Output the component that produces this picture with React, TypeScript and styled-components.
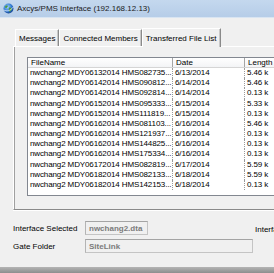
import React from "react";
import styled, { createGlobalStyle } from "styled-components";

const GlobalStyle = createGlobalStyle`
  html, body {
    margin: 0;
    padding: 0;
    background: #f0f0f0;
  }
  * {
    box-sizing: border-box;
  }
`;

const files = [
  ["nwchang2 MDY06132014 HMS082735...", "6/13/2014", "5.46 k"],
  ["nwchang2 MDY06142014 HMS090812...", "6/14/2014", "5.46 k"],
  ["nwchang2 MDY06142014 HMS092814...", "6/14/2014", "0.13 k"],
  ["nwchang2 MDY06152014 HMS095333...", "6/15/2014", "5.33 k"],
  ["nwchang2 MDY06152014 HMS111819...", "6/15/2014", "0.13 k"],
  ["nwchang2 MDY06162014 HMS081103...", "6/16/2014", "5.46 k"],
  ["nwchang2 MDY06162014 HMS121937...", "6/16/2014", "0.13 k"],
  ["nwchang2 MDY06162014 HMS144825...", "6/16/2014", "0.13 k"],
  ["nwchang2 MDY06162014 HMS175334...", "6/16/2014", "0.13 k"],
  ["nwchang2 MDY06172014 HMS082819...", "6/17/2014", "5.59 k"],
  ["nwchang2 MDY06182014 HMS082133...", "6/18/2014", "5.59 k"],
  ["nwchang2 MDY06182014 HMS142153...", "6/18/2014", "0.13 k"],
];

const tabs = ["Messages", "Connected Members", "Transferred File List"];

export default function App() {
  return (
    <>
      <GlobalStyle />
      <Window>
        <TitleBar>
          <GlobeIcon />
          <TitleText>Axcys/PMS Interface (192.168.12.13)</TitleText>
        </TitleBar>

        <TabStrip>
          {tabs.map((t, i) => (
            <Tab key={t} active={i === 2}>
              {t}
            </Tab>
          ))}
        </TabStrip>

        <TabPanel>
          <FileList>
            <ListHeader>
              <HeadCell>FileName</HeadCell>
              <HeadCell>Date</HeadCell>
              <HeadCell>Length</HeadCell>
            </ListHeader>
            {files.map(([name, date, size]) => (
              <ListRow key={name}>
                <Cell>{name}</Cell>
                <Cell>{date}</Cell>
                <Cell>{size}</Cell>
              </ListRow>
            ))}
          </FileList>
        </TabPanel>

        <FormRow gap={11}>
          <Label>Interface Selected</Label>
          <ReadOnlyBox width={63}>nwchang2.dta</ReadOnlyBox>
          <SideLabel>Interface</SideLabel>
        </FormRow>
        <FormRow gap={4}>
          <Label>Gate Folder</Label>
          <ReadOnlyBox width={168}>SiteLink</ReadOnlyBox>
        </FormRow>

        <BottomEdge />
      </Window>
    </>
  );
}

function GlobeIcon() {
  return (
    <Icon viewBox="0 0 12 12">
      <defs>
        <radialGradient id="sea" cx="40%" cy="35%" r="70%">
          <stop offset="0%" stopColor="#9fd0ff" />
          <stop offset="60%" stopColor="#2f78d0" />
          <stop offset="100%" stopColor="#123f8c" />
        </radialGradient>
      </defs>
      <circle cx="6" cy="6" r="5.4" fill="url(#sea)" />
      <path d="M2.2 4.2 C3 2.6 4.6 2.4 5.4 3.2 C5 4.4 3.8 4.6 3.6 5.8 C2.8 5.6 2.2 5 2.2 4.2 Z" fill="#4c9a3c" />
      <path d="M6.6 5 C7.8 4.6 9.4 5.4 9.6 6.8 C9 8.4 7.6 9.6 6.6 9.4 C6.8 8.2 6 7.2 6.6 5 Z" fill="#4c9a3c" />
      <path d="M1 7.6 C3.6 9.4 8 9 11.2 4.4" stroke="#ffffff" strokeWidth="0.9" fill="none" opacity="0.85" />
    </Icon>
  );
}

const Window = styled.div`
  width: 274px;
  height: 273px;
  overflow: hidden;
  display: flex;
  flex-direction: column;
  background: #f0f0f0;
  font-family: "Liberation Sans", Arial, sans-serif;
  font-size: 8px;
  color: #000;
`;

const TitleBar = styled.div`
  flex: none;
  height: 18px;
  display: flex;
  align-items: center;
  gap: 3px;
  padding-left: 3px;
  background: linear-gradient(#c4d8ee, #b6cde8);
  border-bottom: 1px solid #d9e5f2;
`;

const Icon = styled.svg`
  width: 11px;
  height: 11px;
  flex: none;
`;

const TitleText = styled.span`
  white-space: nowrap;
  color: #1b1b1b;
  font-size: 8px;
`;

const TabStrip = styled.div`
  flex: none;
  display: flex;
  align-items: flex-end;
  height: 28px;
  padding-left: 15px;
`;

const Tab = styled.div<{ active?: boolean }>`
  height: ${(p) => (p.active ? 19 : 17)}px;
  display: flex;
  align-items: center;
  padding: 0 3px;
  margin-bottom: ${(p) => (p.active ? -1 : 0)}px;
  white-space: nowrap;
  background: #f0f0f0;
  border-top: 1px solid #ffffff;
  border-left: 1px solid #ffffff;
  border-right: 1px solid #8a8a8a;
  box-shadow: inset -1px 0 0 #c8c8c8;
  position: relative;
  z-index: ${(p) => (p.active ? 1 : 0)};
`;

const TabPanel = styled.div`
  flex: none;
  width: 300px;
  margin-left: 13px;
  padding: 10px 0 13px 13px;
  border-top: 1px solid #ffffff;
  border-left: 1px solid #ffffff;
  border-bottom: 1px solid #8a8a8a;
  box-shadow: inset 1px 0 0 #a0a0a0, 0 1px 0 #ffffff;
`;

const FileList = styled.div`
  height: 139px;
  background: #ffffff;
  border: 1px solid #828790;
`;

const columns = "145px 72px 80px";

const ListHeader = styled.div`
  display: grid;
  grid-template-columns: ${columns};
  height: 10px;
  background: linear-gradient(#ffffff, #f3f4f6);
  border-bottom: 1px solid #d5d5d5;
`;

const HeadCell = styled.div`
  line-height: 9px;
  padding-left: 3px;
  border-right: 1px solid #a5a5a5;
  white-space: nowrap;
`;

const ListRow = styled.div`
  display: grid;
  grid-template-columns: ${columns};
  height: 10.18px;
`;

const Cell = styled.div`
  line-height: 10px;
  padding-left: 2px;
  white-space: nowrap;
  overflow: hidden;
  letter-spacing: -0.12px;
  border-right: 1px dotted #9a9a9a;
`;

const FormRow = styled.div<{ gap: number }>`
  flex: none;
  display: flex;
  align-items: center;
  height: 14px;
  margin-top: ${(p) => p.gap}px;
  padding-left: 13px;
`;

const Label = styled.div`
  width: 72px;
  flex: none;
  white-space: nowrap;
`;

const SideLabel = styled.div`
  margin-left: 107px;
  white-space: nowrap;
  margin-top: 2px;
`;

const ReadOnlyBox = styled.div<{ width: number }>`
  width: ${(p) => p.width}px;
  height: 14px;
  flex: none;
  display: flex;
  align-items: center;
  padding-left: 3px;
  font-weight: bold;
  color: #7b7b7b;
  background: #f0f0f0;
  border: 1px solid #c4c4c4;
  border-top-color: #a4a4a4;
  border-left-color: #b4b4b4;
  white-space: nowrap;
  overflow: hidden;
`;

const BottomEdge = styled.div`
  flex: none;
  margin-top: auto;
  height: 6px;
  background: linear-gradient(#b4b4b4, #8e8e8e);
`;
